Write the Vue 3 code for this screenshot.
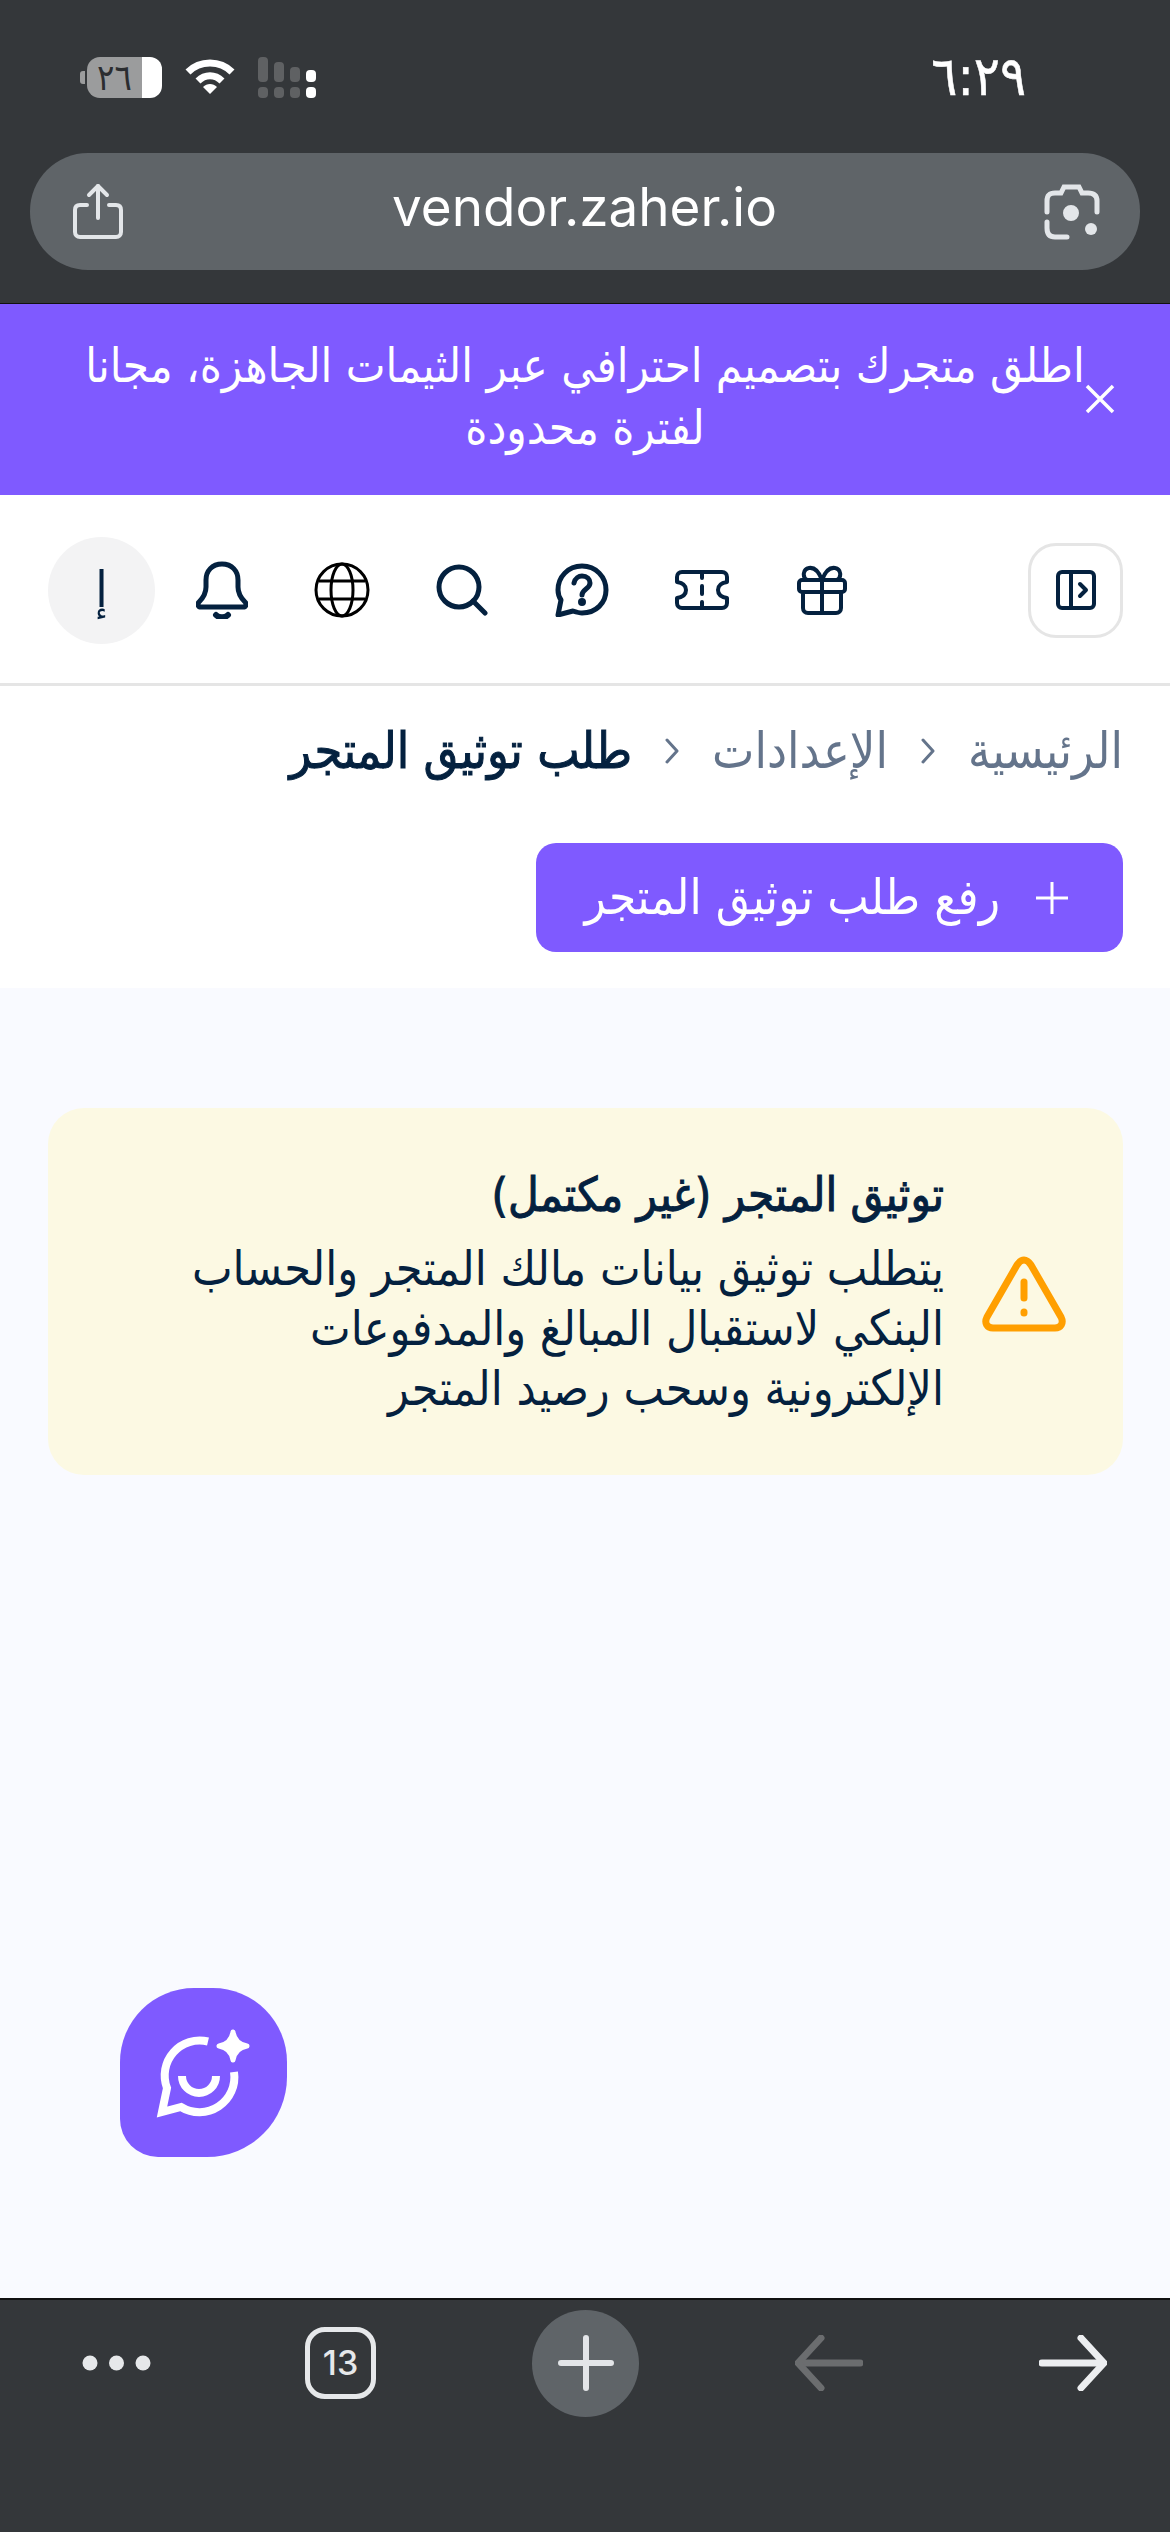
<script setup>
const crumbs = ['الرئيسية', 'الإعدادات']
</script>

<template>
  <div class="screen">
    <div class="browser-top">
      <div class="status" dir="ltr">
        <div class="status-icons">
          <div class="battery"><span>٢٦</span></div>
          <svg class="wifi" width="50" height="38" viewBox="0 0 50 38">
            <path d="M3 15C15 3 35 3 47 15" fill="none" stroke="#fff" stroke-width="7" />
            <path d="M13 24C20 17 30 17 37 24" fill="none" stroke="#fff" stroke-width="7" />
            <path d="M18 30C22 26 28 26 32 30L25 37Z" fill="#fff" />
          </svg>
          <svg class="signal" width="58" height="41" viewBox="0 0 58 41">
            <g fill="#5f6163">
              <rect x="0" y="0" width="10" height="25" rx="4" />
              <rect x="16" y="5" width="10" height="20" rx="4" />
              <rect x="32" y="10" width="10" height="15" rx="4" />
              <rect x="0" y="30" width="10" height="11" rx="4" />
              <rect x="16" y="30" width="10" height="11" rx="4" />
              <rect x="32" y="30" width="10" height="11" rx="4" />
            </g>
            <rect x="48" y="13" width="10" height="12" rx="4" fill="#fff" />
            <rect x="48" y="30" width="10" height="11" rx="4" fill="#fff" />
          </svg>
        </div>
        <div class="clock">٦:٢٩</div>
      </div>
      <div class="urlbar" dir="ltr">
        <svg width="56" height="60" viewBox="0 0 56 60" fill="none" stroke="#e3e6e9" stroke-width="4" stroke-linecap="round" stroke-linejoin="round">
          <path d="M28 4V36" />
          <path d="M19 13L28 4L37 13" />
          <path d="M17 23H10C6.500 23 5 25 5 28V50C5 53 7 55 10 55H46C49 55 51 53 51 50V28C51 25 49.500 23 46 23H39" />
        </svg>
        <span class="url">vendor.zaher.io</span>
        <svg width="58" height="60" viewBox="0 0 58 60" fill="none" stroke="#e3e6e9" stroke-width="5" stroke-linecap="round">
          <path d="M4 30V19C4 13 7 11 12 11H18L21 5H36L39 11H45C50 11 54 13 54 19V30" />
          <path d="M4 40V46C4 52 7 55 12 55H24" />
          <circle cx="28" cy="31" r="7" fill="#e3e6e9" stroke-width="2" />
          <circle cx="48" cy="47" r="6" fill="#e3e6e9" stroke="none" />
        </svg>
      </div>
    </div>

    <div class="promo">
      <p>اطلق متجرك بتصميم احترافي عبر الثيمات الجاهزة، مجانا لفترة محدودة</p>
      <svg class="promo-close" width="30" height="30" viewBox="0 0 30 30" stroke="#fff" stroke-width="3.500">
        <path d="M2 2L28 28M28 2L2 28" />
      </svg>
    </div>

    <header class="topbar">
      <button class="side-btn">
        <svg width="40" height="40" viewBox="0 0 40 40" fill="none" stroke="#04213f" stroke-width="4" stroke-linecap="round" stroke-linejoin="round">
          <rect x="2" y="2" width="36" height="36" rx="4" />
          <path d="M15 2V38" />
          <path d="M24 14L30 20L24 26" />
        </svg>
      </button>
      <div class="tools">
        <div class="tool">
          <svg width="50" height="50" viewBox="0 0 50 50" fill="none" stroke="#04213f" stroke-width="4" stroke-linejoin="round">
            <rect x="2" y="15" width="46" height="12" rx="3" />
            <path d="M6 27V43C6 46 8 48 11 48H39C42 48 44 46 44 43V27" />
            <path d="M25 15V48" />
            <path d="M25 15C22 7 18 2 12 3C6 4 5 12 10 15M25 15C28 7 32 2 38 3C44 4 45 12 40 15" />
          </svg>
        </div>
        <div class="tool">
          <svg width="54" height="40" viewBox="0 0 54 40" fill="none" stroke="#04213f" stroke-width="4" stroke-linecap="round" stroke-linejoin="round">
            <path d="M7 2H47C50 2 52 4 52 7V12C46 13 43 16 43 20C43 24 46 27 52 28V33C52 36 50 38 47 38H7C4 38 2 36 2 33V28C8 27 11 24 11 20C11 16 8 13 2 12V7C2 4 4 2 7 2Z" />
            <path d="M27 2V8M27 16V24M27 32V38" />
          </svg>
        </div>
        <div class="tool">
          <svg width="54" height="54" viewBox="0 0 54 54" fill="none" stroke="#04213f" stroke-width="5" stroke-linecap="round" stroke-linejoin="round">
            <path d="M6 37C4 34 3 31 3 27C3 14 13 3 27 3C41 3 51 14 51 27C51 40 41 50 27 50C24 50 21 49 18 48L3 52Z" />
            <path d="M19 20C20 15 24 13 27 13C32 13 35 16 35 20C35 26 27 26 27 32" />
            <circle cx="27" cy="39" r="1.500" fill="#04213f" />
          </svg>
        </div>
        <div class="tool">
          <svg width="52" height="52" viewBox="0 0 52 52" fill="none" stroke="#04213f" stroke-width="5" stroke-linecap="round">
            <circle cx="23" cy="23" r="20" />
            <path d="M37 37L49 49" />
          </svg>
        </div>
        <div class="tool">
          <svg width="56" height="56" viewBox="0 0 56 56" fill="none" stroke="#000" stroke-width="3">
            <circle cx="28" cy="28" r="26" />
            <ellipse cx="28" cy="28" rx="11" ry="26" />
            <path d="M5 19H51M5 37H51" />
          </svg>
        </div>
        <div class="tool">
          <svg width="52" height="58" viewBox="0 0 52 58" fill="none" stroke="#04213f" stroke-width="5" stroke-linecap="round" stroke-linejoin="round">
            <path d="M26 3C16 3 10 10 10 19V26C10 33 7 37 3 41C1 43 2 46 5 46H47C50 46 51 43 49 41C45 37 42 33 42 26V19C42 10 36 3 26 3Z" />
            <path d="M20 54C23 57 29 57 32 54" stroke-width="6" />
          </svg>
        </div>
        <div class="avatar">إ</div>
      </div>
    </header>

    <section class="page-head">
      <nav class="crumbs">
        <template v-for="c in crumbs" :key="c">
          <span class="crumb">{{ c }}</span>
          <svg width="16" height="26" viewBox="0 0 16 26" fill="none" stroke="#64748b" stroke-width="3" stroke-linecap="round" stroke-linejoin="round">
            <path d="M3 2L13 13L3 24" />
          </svg>
        </template>
        <span class="crumb current">طلب توثيق المتجر</span>
      </nav>
      <button class="add-btn">
        <svg width="32" height="32" viewBox="0 0 32 32" stroke="#fff" stroke-width="3">
          <path d="M16 0V32M0 16H32" />
        </svg>
        <span>رفع طلب توثيق المتجر</span>
      </button>
    </section>

    <main class="content">
      <div class="notice">
        <svg class="notice-icon" width="84" height="76" viewBox="0 0 84 76" fill="none" stroke="#ff9f00" stroke-width="7" stroke-linecap="round" stroke-linejoin="round">
          <path d="M42 4C45 4 47 6 49 9L79 61C82 67 79 72 73 72H11C5 72 2 67 5 61L35 9C37 6 39 4 42 4Z" />
          <path d="M42 26V42" />
          <path d="M42 56V57" />
        </svg>
        <div class="notice-text">
          <h2>توثيق المتجر (غير مكتمل)</h2>
          <p>يتطلب توثيق بيانات مالك المتجر والحساب البنكي لاستقبال المبالغ والمدفوعات الإلكترونية وسحب رصيد المتجر</p>
        </div>
      </div>
      <div class="fab">
        <svg width="167" height="169" viewBox="0 0 167 169" fill="none" stroke="#fff" stroke-width="8">
          <path d="M88 53.500A35 35 0 0 0 47 100L42 124L61 119A35 35 0 0 0 114 84" />
          <path d="M62 88A17 17 0 0 0 96 88" />
          <path d="M113 44Q115 56 127 58Q115 60 113 72Q111 60 99 58Q111 56 113 44Z" fill="#fff" stroke-width="5" stroke-linejoin="round" />
        </svg>
      </div>
    </main>

    <footer class="browser-bottom" dir="ltr">
      <svg width="69" height="16" viewBox="0 0 69 16" fill="#e6e8ea">
        <circle cx="8" cy="8" r="7.500" />
        <circle cx="34.500" cy="8" r="7.500" />
        <circle cx="61" cy="8" r="7.500" />
      </svg>
      <div class="tabs-count">13</div>
      <div class="new-tab">
        <svg width="56" height="56" viewBox="0 0 56 56" stroke="#e3e5e8" stroke-width="6" stroke-linecap="round">
          <path d="M28 3V53M3 28H53" />
        </svg>
      </div>
      <svg width="68" height="56" viewBox="0 0 68 56" fill="none" stroke="#6b6d6f" stroke-width="7" stroke-linecap="round" stroke-linejoin="round">
        <path d="M65 28H4" />
        <path d="M26 3L3 28L26 53" />
      </svg>
      <svg class="forward" width="68" height="56" viewBox="0 0 68 56" fill="none" stroke="#eceef0" stroke-width="7" stroke-linecap="round" stroke-linejoin="round">
        <path d="M3 28H64" />
        <path d="M42 3L65 28L42 53" />
      </svg>
    </footer>
  </div>
</template>

<style>
html, body {
  margin: 0;
  background: #f9faff;
}
</style>

<style scoped>
.screen {
  width: 1170px;
  height: 2532px;
  display: flex;
  flex-direction: column;
  direction: rtl;
  font-family: "DejaVu Sans Condensed", "DejaVu Sans", sans-serif;
  color: #04213f;
  background: #f9faff;
  overflow: hidden;
}
.browser-top {
  height: 304px;
  flex-shrink: 0;
  box-sizing: border-box;
  padding: 57px 30px 0;
  background: #34373a;
  border-bottom: 1px solid #111;
}
.status {
  display: flex;
  justify-content: space-between;
  align-items: flex-start;
  height: 96px;
  padding: 0 114px 0 57px;
}
.status-icons {
  display: flex;
  gap: 23px;
}
.battery {
  width: 75px;
  height: 41px;
  position: relative;
  border-radius: 13px 12px 12px 13px;
  background: linear-gradient(90deg, #9b9c9d 55px, #fff 55px);
  color: #2b2d30;
  font-size: 36px;
  line-height: 41px;
  text-align: center;
}
.battery::before {
  content: "";
  position: absolute;
  left: -7px;
  top: 14px;
  width: 5px;
  height: 13px;
  border-radius: 3px 0 0 3px;
  background: #9b9c9d;
}
.battery span {
  display: block;
  width: 55px;
}
.clock {
  color: #fff;
  font-size: 54px;
  line-height: 40px;
  -webkit-text-stroke: 0.5px #fff;
}
.urlbar {
  height: 117px;
  border-radius: 58px;
  background: #5f6468;
  display: flex;
  align-items: center;
  justify-content: space-between;
  padding: 0 39px 0 40px;
  box-sizing: border-box;
}
.url {
  font-family: Inter, sans-serif;
  font-size: 53px;
  color: #fff;
  margin-bottom: 10px;
}
.promo {
  height: 191px;
  flex-shrink: 0;
  box-sizing: border-box;
  background: #7f5aff;
  color: #fff;
  display: flex;
  align-items: center;
  position: relative;
  padding: 0 85px;
}
.promo p {
  margin: 0 0 5px;
  width: 100%;
  font-size: 47px;
  line-height: 62px;
  text-align: center;
}
.promo-close {
  position: absolute;
  right: 55px;
  top: 80px;
}
.topbar {
  height: 191px;
  flex-shrink: 0;
  box-sizing: border-box;
  background: #fff;
  border-bottom: 3px solid #e5e5e5;
  display: flex;
  align-items: center;
  justify-content: space-between;
  padding: 2px 47px 0 48px;
}
.side-btn {
  width: 95px;
  height: 95px;
  box-sizing: border-box;
  padding: 0;
  background: #fff;
  border: 3px solid #e5e5e5;
  border-radius: 28px;
  display: flex;
  align-items: center;
  justify-content: center;
}
.tools {
  display: flex;
  align-items: center;
}
.tool {
  width: 120px;
  display: flex;
  justify-content: center;
}
.avatar {
  width: 107px;
  height: 107px;
  margin-right: 7px;
  border-radius: 50%;
  background: #f3f3f4;
  font-size: 50px;
  line-height: 107px;
  text-align: center;
}
.page-head {
  height: 302px;
  flex-shrink: 0;
  box-sizing: border-box;
  background: #fff;
  padding: 30px 47px 0;
}
.crumbs {
  display: flex;
  align-items: center;
  gap: 32px;
  height: 70px;
  margin-bottom: 57px;
}
.crumb {
  font-size: 50px;
  line-height: 70px;
  color: #64748b;
}
.crumb.current {
  color: #04213f;
  -webkit-text-stroke: 1px #04213f;
}
.add-btn {
  width: 587px;
  height: 109px;
  border: 0;
  border-radius: 20px;
  background: #7f5aff;
  color: #fff;
  font: inherit;
  font-size: 49px;
  display: flex;
  align-items: center;
  gap: 36px;
  padding: 0 55px 0 0;
}
.content {
  flex: 1;
  position: relative;
  padding: 120px 47px 0 48px;
}
.notice {
  height: 367px;
  box-sizing: border-box;
  background: #fcf9e3;
  border-radius: 36px;
  display: flex;
  align-items: center;
  gap: 38px;
  padding: 0 57px 0 0;
}
.notice-icon {
  flex-shrink: 0;
  margin-top: 4px;
}
.notice-text {
  width: 780px;
}
.notice-text h2 {
  margin: 0 0 13px;
  font-size: 47px;
  font-weight: 400;
  -webkit-text-stroke: 1px #04213f;
  line-height: 60px;
}
.notice-text p {
  margin: 0;
  font-size: 48px;
  line-height: 60px;
}
.fab {
  position: absolute;
  left: 120px;
  top: 1000px;
  width: 167px;
  height: 169px;
  background: #7f5aff;
  border-radius: 74px 74px 80px 38px;
}
.browser-bottom {
  height: 234px;
  flex-shrink: 0;
  box-sizing: border-box;
  background: #34373a;
  border-top: 2px solid #111;
  display: flex;
  justify-content: flex-start;
  align-items: center;
  gap: 156px;
  padding: 0 0 106px 82px;
}
.forward {
  margin-left: 20px;
}
.tabs-count {
  width: 71px;
  height: 72px;
  margin-left: -2px;
  box-sizing: border-box;
  border: 5px solid #e6e8ea;
  border-radius: 20px;
  color: #e6e8ea;
  font-family: Inter, sans-serif;
  font-size: 34px;
  font-weight: 500;
  line-height: 62px;
  text-align: center;
}
.new-tab {
  width: 107px;
  height: 107px;
  border-radius: 50%;
  background: #5f6468;
  display: flex;
  align-items: center;
  justify-content: center;
}
</style>
